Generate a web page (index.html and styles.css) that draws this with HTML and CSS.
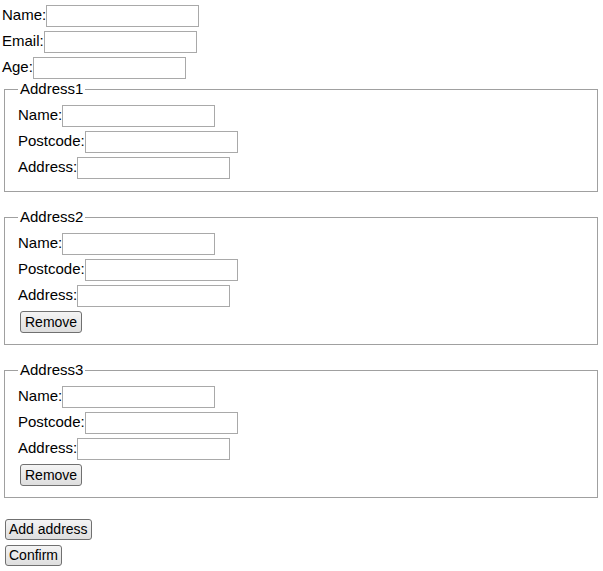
FILE: index.html
```html
<!DOCTYPE html>
<html>
<head>
<meta charset="utf-8">
<link rel="stylesheet" href="styles.css">
</head>
<body>
<form class="form">
  <div class="row"><label class="lbl">Name:</label><input class="field" type="text"></div>
  <div class="row"><label class="lbl">Email:</label><input class="field" type="text"></div>
  <div class="row"><label class="lbl">Age:</label><input class="field" type="text"></div>

  <fieldset class="group">
    <legend class="legend">Address1</legend>
    <div class="row"><label class="lbl">Name:</label><input class="field" type="text"></div>
    <div class="row"><label class="lbl">Postcode:</label><input class="field" type="text"></div>
    <div class="row"><label class="lbl">Address:</label><input class="field" type="text"></div>
  </fieldset>

  <fieldset class="group group-removable">
    <legend class="legend">Address2</legend>
    <div class="row"><label class="lbl">Name:</label><input class="field" type="text"></div>
    <div class="row"><label class="lbl">Postcode:</label><input class="field" type="text"></div>
    <div class="row"><label class="lbl">Address:</label><input class="field" type="text"></div>
    <div class="row"><button class="btn btn-remove" type="button">Remove</button></div>
  </fieldset>

  <fieldset class="group group-removable">
    <legend class="legend">Address3</legend>
    <div class="row"><label class="lbl">Name:</label><input class="field" type="text"></div>
    <div class="row"><label class="lbl">Postcode:</label><input class="field" type="text"></div>
    <div class="row"><label class="lbl">Address:</label><input class="field" type="text"></div>
    <div class="row"><button class="btn btn-remove" type="button">Remove</button></div>
  </fieldset>

  <div class="actions">
    <div class="row"><button class="btn" type="button">Add address</button></div>
    <div class="row"><button class="btn" type="button">Confirm</button></div>
  </div>
</form>
</body>
</html>
```

FILE: styles.css
```css
html, body {
  background: #ffffff;
}
body {
  margin: 0;
  padding: 3px 0 0 2px;
  font-family: "Liberation Sans", Arial, sans-serif;
  font-size: 15px;
  color: #000000;
}
.form {
  margin: 0;
}
.row {
  display: flex;
  align-items: flex-start;
  height: 26px;
}
.lbl {
  line-height: 24px;
  white-space: nowrap;
}
.field {
  box-sizing: border-box;
  width: 153px;
  height: 22px;
  margin: 2px 0 0 0;
  padding: 1px;
  border: 1px solid #a9a9a9;
  background: #ffffff;
  font-family: "Liberation Sans", Arial, sans-serif;
  font-size: 14px;
  outline: none;
}
.group {
  margin: 0 5px 17px 2px;
  padding: 6px 0 10px 13px;
  border: 1px solid #a0a0a0;
  min-width: 0;
}
.group-removable {
  padding-bottom: 9px;
}
.legend {
  padding: 0 2px;
  line-height: 16px;
  font-size: 15px;
}
.btn {
  box-sizing: border-box;
  height: 21px;
  margin: 2px 0 0 2px;
  padding: 0 3px;
  border: 1px solid #707070;
  border-radius: 3px;
  background: linear-gradient(#f4f4f4, #dedede);
  font-family: "Liberation Sans", Arial, sans-serif;
  font-size: 14px;
  line-height: 17px;
  color: #000000;
}
.btn-remove {
  height: 22px;
  padding: 0 4px;
}
.actions {
  padding: 2px 0 0 1px;
}
```
